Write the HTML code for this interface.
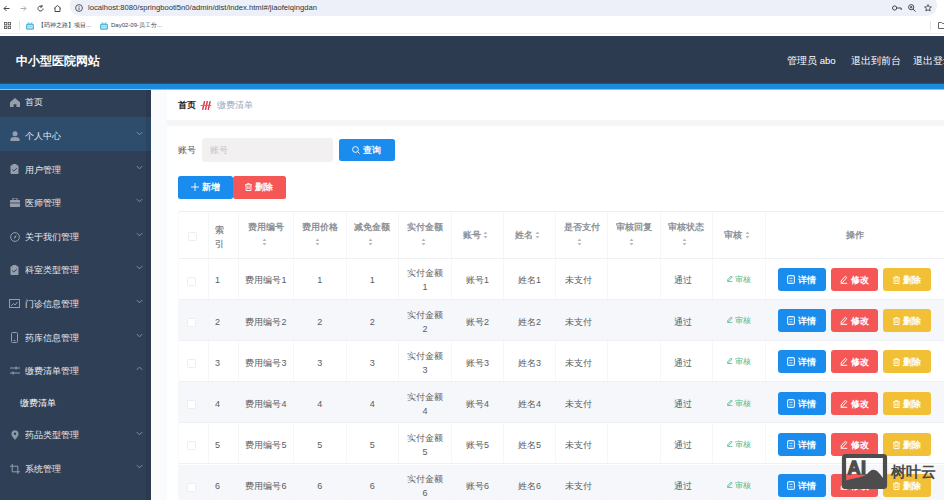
<!DOCTYPE html>
<html><head><meta charset="utf-8">
<style>
*{box-sizing:border-box;margin:0;padding:0}
html,body{width:944px;height:500px;overflow:hidden;background:#fff;font-family:"Liberation Sans",sans-serif}
#chrome{position:absolute;left:0;top:0;width:944px;height:36px;background:#fff}
#addr{position:absolute;left:70px;top:-5px;width:867px;height:21px;border-radius:10px;background:#edf0f8}
#url{position:absolute;left:88px;top:2.5px;font-size:7.65px;line-height:10px;color:#333;white-space:nowrap;letter-spacing:0px}
#bmbar{position:absolute;left:0;top:16px;width:944px;height:18px;background:#fff;border-bottom:1px solid #eceef1}
.bm{position:absolute;top:5px;font-size:6px;line-height:9px;color:#3c4043;white-space:nowrap}
#hdr{position:absolute;left:0;top:36px;width:944px;height:47px;background:#2c3b4f}
#title{position:absolute;left:16px;top:2px;line-height:47px;font-size:12.2px;font-weight:bold;color:#fff;letter-spacing:0px}
.hr{position:absolute;top:0.8px;line-height:48px;font-size:9.6px;font-weight:500;color:#fff;white-space:nowrap}
#blue{position:absolute;left:0;top:83px;width:944px;height:7px;background:linear-gradient(#1f5487 0,#1f5487 1px,#1b8be0 1px,#1b8be0 6px,#86c3ee 6px);z-index:5}
#side{position:absolute;left:0;top:83px;width:151px;height:417px;background:#2f3f55;overflow:hidden}
#side .edge{position:absolute;left:146px;top:0;width:4.5px;height:417px;background:rgba(0,0,0,0.07)}#side .edge2{position:absolute;left:150.5px;top:0;width:1px;height:417px;background:#1f2b3a}
.mi{position:absolute;left:0;width:151px;color:#e9ecf0;font-size:8.8px;font-weight:500;white-space:nowrap}
.mi.act{background:#2e4c6b}
.mi .ic{position:absolute;left:9px;top:1.6px;width:11px;height:100%;display:flex;align-items:center;justify-content:center}
.mi .ic svg{display:block}
.mi .tx{position:absolute;left:25px;top:2.6px}
.mi .chev{position:absolute;left:135.5px;top:50%;margin-top:-3.2px}
.mi.sub{padding-left:19.5px;padding-top:1.5px;color:#fff;font-weight:500}
#main{position:absolute;left:151px;top:89px;width:793px;height:411px;background:#fafbfc}
#gap{position:absolute;left:167px;top:119.5px;width:777px;height:6.5px;background:#f5f6f7}
#crumb{position:absolute;left:167px;top:89px;width:777px;height:31px;background:#fff}
#card{position:absolute;left:166.5px;top:126px;width:777px;height:374px;background:#fff}
.crumb1{position:absolute;left:178px;top:89px;line-height:32px;font-size:9px;font-weight:bold;color:#1f1f1f}
.crumb2{position:absolute;left:216.5px;top:89px;line-height:32px;font-size:8.6px;color:#97a8be}
.sep{position:absolute;left:200px;top:99px;width:12px;height:12px}
.lbl{position:absolute;left:177.5px;top:137.5px;line-height:24px;font-size:8.8px;font-weight:500;color:#4f5155}
.inp{position:absolute;left:202px;top:137.5px;width:131px;height:24px;border-radius:3px;background:#f2f0f0}
.inp span{position:absolute;left:8px;top:0;line-height:24px;font-size:8.6px;color:#c0c4cc}
.sbtn{position:absolute;border-radius:2.5px;color:#fff;font-size:9.2px;font-weight:bold;text-align:center;white-space:nowrap}
.td{position:absolute;border-right:1px solid #f5f6f8;border-bottom:1px solid #eef0f4;display:flex;align-items:center;justify-content:center;background:#fff}
.td.st{background:#f5f7fa}
.td.last{border-right:none}
.ht{font-size:9.4px;font-weight:bold;line-height:16px;padding-top:0px;color:#8e9197;text-align:center;width:100%}
.bt{font-size:9px;font-weight:500;line-height:16px;padding-top:3.5px;color:#5a5c60;text-align:center;width:100%}
.gl{font-size:7.8px;color:#4cba92;white-space:nowrap;padding-top:2px}
.cb{display:block;width:9px;height:9px;border:1px solid #eceef1;border-radius:1.5px;background:#fff}
.sort{vertical-align:middle}
.ops{display:flex;gap:5px;position:absolute;left:12.5px;top:9.5px}
.btn{display:inline-block;width:47.5px;height:23px;line-height:24.5px;border-radius:3px;color:#fff;font-size:9.2px;font-weight:bold;text-align:center;white-space:nowrap}
.btn svg{vertical-align:-1px}
.b1{background:#1a8cee}.b2{background:#f55656}.b3{background:#f2c036}
#tbltop{position:absolute;left:178px;top:211px;width:766px;height:1px;background:#eceef3}
#tblleft{position:absolute;left:177.5px;top:211px;width:1px;height:289px;background:#f7f8f9}
#wm{position:absolute;left:842px;top:455px;width:44px;height:37px;border:4px solid #4a4a4a;border-radius:4px;background:rgba(255,255,255,0.3);z-index:9}
#wmtxt{position:absolute;left:890.5px;top:460px;font-size:15px;font-weight:bold;color:#4a4a4a;z-index:9;line-height:24px;white-space:nowrap}
</style></head>
<body>
<div id="chrome">
  <div id="addr"></div>
  <svg style="position:absolute;left:3px;top:5px" width="7" height="7" viewBox="0 0 7 7"><path d="M6.5 3.5H1M3.5 1L1 3.5 3.5 6" stroke="#474747" stroke-width="1" fill="none"/></svg>
  <svg style="position:absolute;left:20px;top:5px" width="7" height="7" viewBox="0 0 7 7"><path d="M0.5 3.5H6M3.5 1L6 3.5 3.5 6" stroke="#b0b0b0" stroke-width="1" fill="none"/></svg>
  <svg style="position:absolute;left:37px;top:4.5px" width="7" height="7" viewBox="0 0 7 7"><path d="M6 3.5A2.5 2.5 0 1 1 5 1.5M5 0v2h-2" stroke="#474747" stroke-width="1" fill="none"/></svg>
  <svg style="position:absolute;left:54px;top:4.5px" width="7" height="7" viewBox="0 0 7 7"><path d="M1 3v3.5h5V3M0 3.5L3.5 0.5 7 3.5" stroke="#474747" stroke-width="1" fill="none"/></svg>
  <svg style="position:absolute;left:74.5px;top:4px" width="8" height="8" viewBox="0 0 8 8"><circle cx="4" cy="4" r="3.4" stroke="#474747" stroke-width="0.9" fill="none"/><path d="M4 3.4v2.6M4 2v0.8" stroke="#474747" stroke-width="0.9"/></svg>
  <div id="url">localhost:8080/springbootl5n0/admin/dist/index.html#/jiaofeiqingdan</div>
  <svg style="position:absolute;left:892px;top:5px" width="10" height="6" viewBox="0 0 10 6"><circle cx="2.6" cy="3" r="2.1" stroke="#474747" stroke-width="1" fill="none"/><path d="M4.7 3h4.5v2" stroke="#474747" stroke-width="1" fill="none"/></svg>
  <svg style="position:absolute;left:908px;top:4px" width="8" height="8" viewBox="0 0 8 8"><circle cx="3.2" cy="3.2" r="2.6" stroke="#474747" stroke-width="1" fill="none"/><path d="M5 5l2.6 2.6M2 3.2h2.4M3.2 2v2.4" stroke="#474747" stroke-width="1"/></svg>
  <svg style="position:absolute;left:923.5px;top:4px" width="8" height="8" viewBox="0 0 8 8"><path d="M4 0.6l1 2.2 2.4 0.2-1.8 1.6 0.6 2.4L4 5.8 1.8 7l0.6-2.4L0.6 3l2.4-0.2z" stroke="#474747" stroke-width="0.9" fill="none"/></svg>
  <div id="bmbar"></div>
  <svg style="position:absolute;left:4px;top:22px" width="7" height="7" viewBox="0 0 7 7"><rect x="0.4" y="0.4" width="2.4" height="2.4" stroke="#555" stroke-width="0.8" fill="none"/><rect x="4.2" y="0.4" width="2.4" height="2.4" stroke="#555" stroke-width="0.8" fill="none"/><rect x="0.4" y="4.2" width="2.4" height="2.4" stroke="#555" stroke-width="0.8" fill="none"/><rect x="4.2" y="4.2" width="2.4" height="2.4" stroke="#555" stroke-width="0.8" fill="none"/></svg>
  <div style="position:absolute;left:19px;top:21px;width:1px;height:9px;background:#e3e3e3"></div>
  <svg style="position:absolute;left:26px;top:21.5px" width="8" height="8" viewBox="0 0 8 8"><rect x="0" y="1.6" width="8" height="6.2" rx="1.6" fill="#52b9d9"/><path d="M2 0.2l1 1.5M6 0.2l-1 1.5" stroke="#52b9d9" stroke-width="0.9"/><rect x="1.2" y="3" width="5.6" height="3.4" rx="0.6" fill="#bfe6f2"/><rect x="2.2" y="4.2" width="1.2" height="0.8" fill="#52b9d9"/><rect x="4.6" y="4.2" width="1.2" height="0.8" fill="#52b9d9"/></svg>
  <div class="bm" style="left:38px;top:21px">【码神之路】项目...</div>
  <svg style="position:absolute;left:100px;top:21.5px" width="8" height="8" viewBox="0 0 8 8"><rect x="0" y="1.6" width="8" height="6.2" rx="1.6" fill="#52b9d9"/><path d="M2 0.2l1 1.5M6 0.2l-1 1.5" stroke="#52b9d9" stroke-width="0.9"/><rect x="1.2" y="3" width="5.6" height="3.4" rx="0.6" fill="#bfe6f2"/><rect x="2.2" y="4.2" width="1.2" height="0.8" fill="#52b9d9"/><rect x="4.6" y="4.2" width="1.2" height="0.8" fill="#52b9d9"/></svg>
  <div class="bm" style="left:111px;top:21px">Day02-09-员工分...</div>
  <div style="position:absolute;left:930px;top:21px;width:1px;height:9px;background:#e3e3e3"></div>
  <svg style="position:absolute;left:938px;top:22px" width="9" height="7" viewBox="0 0 9 7"><path d="M0.5 0.5h3l1 1h4v5h-8z" stroke="#555" stroke-width="0.9" fill="none"/></svg>
</div>
<div id="hdr">
  <div id="title">中小型医院网站</div>
  <div class="hr" style="left:787px">管理员 abo</div>
  <div class="hr" style="left:851px">退出到前台</div>
  <div class="hr" style="left:912.8px">退出登录</div>
</div>
<div id="blue"></div>
<div id="side">
<div class="mi" style="top:0.80px;height:33.6px;line-height:33.6px"><span class="ic"><svg width="10" height="9" viewBox="0 0 10 9"><path d="M5 0L0 4.2V9h3.6V6.2h2.8V9H10V4.2z" fill="#959eac"/></svg></span><span class="tx">首页</span></div>
<div class="mi act" style="top:34.40px;height:33.6px;line-height:33.6px"><span class="ic"><svg width="10" height="10" viewBox="0 0 10 10"><circle cx="5" cy="2.8" r="2.5" fill="#959eac"/><path d="M0.5 10v-1.8C0.5 6.8 2 6 5 6s4.5 .8 4.5 2.2V10z" fill="#959eac"/></svg></span><span class="tx">个人中心</span><svg class="chev" width="7" height="5" viewBox="0 0 7 5"><path d="M0.8 1.1L3.5 3.8l2.7-2.7" stroke="#8f99a7" stroke-width="0.9" fill="none"/></svg></div>
<div class="mi" style="top:68.00px;height:33.6px;line-height:33.6px"><span class="ic"><svg width="9" height="10" viewBox="0 0 9 10"><rect x="0.5" y="1.2" width="8" height="8.8" rx="0.8" fill="#959eac"/><rect x="2.5" y="0" width="4" height="2.2" fill="#959eac"/><path d="M2.2 5.5l1.6 1.6 3-3" stroke="#304156" stroke-width="1" fill="none"/></svg></span><span class="tx">用户管理</span><svg class="chev" width="7" height="5" viewBox="0 0 7 5"><path d="M0.8 1.1L3.5 3.8l2.7-2.7" stroke="#8f99a7" stroke-width="0.9" fill="none"/></svg></div>
<div class="mi" style="top:101.60px;height:33.6px;line-height:33.6px"><span class="ic"><svg width="10" height="9" viewBox="0 0 10 9"><rect x="0" y="2" width="10" height="7" rx="0.8" fill="#959eac"/><rect x="3" y="0" width="4" height="2.5" fill="none" stroke="#959eac" stroke-width="1"/><rect x="0" y="4.6" width="10" height="0.8" fill="#304156"/></svg></span><span class="tx">医师管理</span><svg class="chev" width="7" height="5" viewBox="0 0 7 5"><path d="M0.8 1.1L3.5 3.8l2.7-2.7" stroke="#8f99a7" stroke-width="0.9" fill="none"/></svg></div>
<div class="mi" style="top:135.20px;height:33.6px;line-height:33.6px"><span class="ic"><svg width="10" height="10" viewBox="0 0 10 10"><circle cx="5" cy="5" r="4.4" fill="none" stroke="#959eac" stroke-width="1"/><path d="M6.8 2.8L5.6 5.6 3.6 7 4.6 4.6z" fill="#959eac"/></svg></span><span class="tx">关于我们管理</span><svg class="chev" width="7" height="5" viewBox="0 0 7 5"><path d="M0.8 1.1L3.5 3.8l2.7-2.7" stroke="#8f99a7" stroke-width="0.9" fill="none"/></svg></div>
<div class="mi" style="top:168.80px;height:33.6px;line-height:33.6px"><span class="ic"><svg width="9" height="10" viewBox="0 0 9 10"><rect x="0.5" y="1.2" width="8" height="8.8" rx="0.8" fill="#959eac"/><rect x="2.5" y="0" width="4" height="2.2" fill="#959eac"/><path d="M2.2 5.5l1.6 1.6 3-3" stroke="#304156" stroke-width="1" fill="none"/></svg></span><span class="tx">科室类型管理</span><svg class="chev" width="7" height="5" viewBox="0 0 7 5"><path d="M0.8 1.1L3.5 3.8l2.7-2.7" stroke="#8f99a7" stroke-width="0.9" fill="none"/></svg></div>
<div class="mi" style="top:202.40px;height:33.6px;line-height:33.6px"><span class="ic"><svg width="11" height="9" viewBox="0 0 11 9"><rect x="0.5" y="0.5" width="10" height="8" fill="none" stroke="#959eac" stroke-width="1"/><path d="M2 7l2.5-2.5 1.5 1.5 2.5-3" stroke="#959eac" stroke-width="1" fill="none"/></svg></span><span class="tx">门诊信息管理</span><svg class="chev" width="7" height="5" viewBox="0 0 7 5"><path d="M0.8 1.1L3.5 3.8l2.7-2.7" stroke="#8f99a7" stroke-width="0.9" fill="none"/></svg></div>
<div class="mi" style="top:236.00px;height:33.6px;line-height:33.6px"><span class="ic"><svg width="7" height="11" viewBox="0 0 7 11"><rect x="0.5" y="0.5" width="6" height="10" rx="1" fill="none" stroke="#959eac" stroke-width="1"/><rect x="2.5" y="8" width="2" height="1" fill="#959eac"/></svg></span><span class="tx">药库信息管理</span><svg class="chev" width="7" height="5" viewBox="0 0 7 5"><path d="M0.8 1.1L3.5 3.8l2.7-2.7" stroke="#8f99a7" stroke-width="0.9" fill="none"/></svg></div>
<div class="mi" style="top:269.60px;height:33.6px;line-height:33.6px"><span class="ic"><svg width="10" height="9" viewBox="0 0 10 9"><path d="M0 2h10M0 7h10" stroke="#959eac" stroke-width="1"/><rect x="5.5" y="0.5" width="1.2" height="3" fill="#959eac"/><rect x="2.5" y="5.5" width="1.2" height="3" fill="#959eac"/></svg></span><span class="tx">缴费清单管理</span><svg class="chev" width="7" height="5" viewBox="0 0 7 5"><path d="M0.8 3.8L3.5 1.1l2.7 2.7" stroke="#8f99a7" stroke-width="0.9" fill="none"/></svg></div>
<div class="mi sub" style="top:303.20px;height:30.7px;line-height:30.7px">缴费清单</div>
<div class="mi" style="top:333.90px;height:33.6px;line-height:33.6px"><span class="ic"><svg width="8" height="10" viewBox="0 0 8 10"><path d="M4 0.3C1.9 0.3 0.4 1.9 0.4 3.9c0 2.3 3.6 5.8 3.6 5.8S7.6 6.2 7.6 3.9C7.6 1.9 6.1 0.3 4 0.3z" fill="#8e97a5"/><circle cx="4" cy="3.8" r="1.2" fill="#2f3f55"/></svg></span><span class="tx">药品类型管理</span><svg class="chev" width="7" height="5" viewBox="0 0 7 5"><path d="M0.8 1.1L3.5 3.8l2.7-2.7" stroke="#8f99a7" stroke-width="0.9" fill="none"/></svg></div>
<div class="mi" style="top:367.50px;height:33.6px;line-height:33.6px"><span class="ic"><svg width="10" height="10" viewBox="0 0 10 10"><path d="M2.2 0v7.8H10M0 2.2h7.8V10" stroke="#959eac" stroke-width="1" fill="none"/></svg></span><span class="tx">系统管理</span><svg class="chev" width="7" height="5" viewBox="0 0 7 5"><path d="M0.8 1.1L3.5 3.8l2.7-2.7" stroke="#8f99a7" stroke-width="0.9" fill="none"/></svg></div>
<div class="edge"></div><div class="edge2"></div>
</div>
<div id="main"></div>
<div id="crumb"></div>
<div id="card"></div><div id="gap"></div>
<div class="crumb1">首页</div>
<svg style="position:absolute;left:199.5px;top:99.5px" width="12" height="11" viewBox="0 0 12 11"><path d="M4.6 1.2 L2.6 9.8 M7.4 1.2 L5.4 9.8 M10.2 1.2 L8.2 9.8" stroke="#d8323c" stroke-width="1.4" fill="none"/><path d="M0.6 5.5 L11.2 5.5" stroke="#ee5a62" stroke-width="1.1"/></svg>
<div class="crumb2">缴费清单</div>
<div class="lbl">账号</div>
<div class="inp"><span>账号</span></div>
<div class="sbtn" style="left:338.5px;top:138.5px;width:56.5px;height:22.5px;line-height:22.5px;background:#1a8cee"><svg width="8" height="8" viewBox="0 0 8 8" style="vertical-align:-1px"><circle cx="3.5" cy="3.5" r="2.9" stroke="#fff" stroke-width="0.9" fill="none"/><path d="M5.6 5.6L7.6 7.6" stroke="#fff" stroke-width="0.9"/></svg> 查询</div>
<div class="sbtn" style="left:178px;top:175.5px;width:54.5px;height:23px;line-height:23px;background:#1a8cee"><svg width="8" height="8" viewBox="0 0 8 8" style="vertical-align:-1px"><path d="M4 0v8M0 4h8" stroke="#fff" stroke-width="0.9"/></svg> 新增</div>
<div class="sbtn" style="left:232.5px;top:175.5px;width:53.5px;height:23px;line-height:23px;background:#f55656"><svg width="7" height="8" viewBox="0 0 7 8" style="vertical-align:-1px"><path d="M0 1.8h7M2.3 1.8V0.6h2.4v1.2M1 1.8v5.7h5V1.8M2.8 3.3v2.8M4.2 3.3v2.8" stroke="#fff" stroke-width="0.9" fill="none"/></svg> 删除</div>
<div class="td th" style="left:178px;top:211.5px;width:31px;height:47.0px"><span class="cb" style="margin-top:3px;margin-left:-2px"></span></div>
<div class="td th" style="left:209px;top:211.5px;width:30px;height:47.0px"><div class="ht" style="text-align:left;padding-left:6px;line-height:14px;padding-top:4.8px">索<br>引</div></div>
<div class="td th" style="left:239px;top:211.5px;width:55px;height:47.0px"><div class="ht">费用编号<br><span style="position:relative;top:-1px"><svg class="sort" style="margin-right:4px" width="5" height="8" viewBox="0 0 5 8"><path d="M2.5 0.5L4.5 3H0.5z M2.5 7.5L4.5 5H0.5z" fill="#b7bcc4"/></svg></span></div></div>
<div class="td th" style="left:294px;top:211.5px;width:52.5px;height:47.0px"><div class="ht">费用价格<br><span style="position:relative;top:-1px"><svg class="sort" style="margin-right:4px" width="5" height="8" viewBox="0 0 5 8"><path d="M2.5 0.5L4.5 3H0.5z M2.5 7.5L4.5 5H0.5z" fill="#b7bcc4"/></svg></span></div></div>
<div class="td th" style="left:346.5px;top:211.5px;width:52.5px;height:47.0px"><div class="ht">减免金额<br><span style="position:relative;top:-1px"><svg class="sort" style="margin-right:4px" width="5" height="8" viewBox="0 0 5 8"><path d="M2.5 0.5L4.5 3H0.5z M2.5 7.5L4.5 5H0.5z" fill="#b7bcc4"/></svg></span></div></div>
<div class="td th" style="left:399px;top:211.5px;width:53px;height:47.0px"><div class="ht">实付金额<br><span style="position:relative;top:-1px"><svg class="sort" style="margin-right:4px" width="5" height="8" viewBox="0 0 5 8"><path d="M2.5 0.5L4.5 3H0.5z M2.5 7.5L4.5 5H0.5z" fill="#b7bcc4"/></svg></span></div></div>
<div class="td th" style="left:452px;top:211.5px;width:52px;height:47.0px"><div class="ht">账号 <svg class="sort" style="margin-right:4px" width="5" height="8" viewBox="0 0 5 8"><path d="M2.5 0.5L4.5 3H0.5z M2.5 7.5L4.5 5H0.5z" fill="#b7bcc4"/></svg></div></div>
<div class="td th" style="left:504px;top:211.5px;width:52px;height:47.0px"><div class="ht">姓名 <svg class="sort" style="margin-right:4px" width="5" height="8" viewBox="0 0 5 8"><path d="M2.5 0.5L4.5 3H0.5z M2.5 7.5L4.5 5H0.5z" fill="#b7bcc4"/></svg></div></div>
<div class="td th" style="left:556px;top:211.5px;width:52px;height:47.0px"><div class="ht">是否支付<br><span style="position:relative;top:-1px"><svg class="sort" style="margin-right:4px" width="5" height="8" viewBox="0 0 5 8"><path d="M2.5 0.5L4.5 3H0.5z M2.5 7.5L4.5 5H0.5z" fill="#b7bcc4"/></svg></span></div></div>
<div class="td th" style="left:608px;top:211.5px;width:52.5px;height:47.0px"><div class="ht">审核回复<br><span style="position:relative;top:-1px"><svg class="sort" style="margin-right:4px" width="5" height="8" viewBox="0 0 5 8"><path d="M2.5 0.5L4.5 3H0.5z M2.5 7.5L4.5 5H0.5z" fill="#b7bcc4"/></svg></span></div></div>
<div class="td th" style="left:660.5px;top:211.5px;width:52.5px;height:47.0px"><div class="ht">审核状态<br><span style="position:relative;top:-1px"><svg class="sort" style="margin-right:4px" width="5" height="8" viewBox="0 0 5 8"><path d="M2.5 0.5L4.5 3H0.5z M2.5 7.5L4.5 5H0.5z" fill="#b7bcc4"/></svg></span></div></div>
<div class="td th" style="left:713px;top:211.5px;width:52.5px;height:47.0px"><div class="ht">审核 <svg class="sort" style="margin-right:4px" width="5" height="8" viewBox="0 0 5 8"><path d="M2.5 0.5L4.5 3H0.5z M2.5 7.5L4.5 5H0.5z" fill="#b7bcc4"/></svg></div></div>
<div class="td th last" style="left:765.5px;top:211.5px;width:178.5px;height:47.0px"><div class="ht">操作</div></div>
<div class="td tb" style="left:178px;top:258.5px;width:31px;height:41.19999999999999px"><span class="cb" style="margin-top:5px;margin-left:-4px"></span></div>
<div class="td tb" style="left:209px;top:258.5px;width:30px;height:41.19999999999999px"><div class="bt" style="text-align:left;padding-left:6px">1</div></div>
<div class="td tb" style="left:239px;top:258.5px;width:55px;height:41.19999999999999px"><div class="bt">费用编号1</div></div>
<div class="td tb" style="left:294px;top:258.5px;width:52.5px;height:41.19999999999999px"><div class="bt">1</div></div>
<div class="td tb" style="left:346.5px;top:258.5px;width:52.5px;height:41.19999999999999px"><div class="bt">1</div></div>
<div class="td tb" style="left:399px;top:258.5px;width:53px;height:41.19999999999999px"><div class="bt" style="line-height:14px">实付金额<br>1</div></div>
<div class="td tb" style="left:452px;top:258.5px;width:52px;height:41.19999999999999px"><div class="bt">账号1</div></div>
<div class="td tb" style="left:504px;top:258.5px;width:52px;height:41.19999999999999px"><div class="bt">姓名1</div></div>
<div class="td tb" style="left:556px;top:258.5px;width:52px;height:41.19999999999999px"><div class="bt" style="padding-right:6.5px">未支付</div></div>
<div class="td tb" style="left:608px;top:258.5px;width:52.5px;height:41.19999999999999px"><div class="bt"></div></div>
<div class="td tb" style="left:660.5px;top:258.5px;width:52.5px;height:41.19999999999999px"><div class="bt" style="padding-right:6.5px">通过</div></div>
<div class="td tb" style="left:713px;top:258.5px;width:52.5px;height:41.19999999999999px"><div class="gl"><svg width="6" height="7" viewBox="0 0 6 7"><path d="M0.8 6L0.6 4.8 4.2 1 5.2 2 1.6 5.8z M0.3 6.6h5" stroke="#42b983" stroke-width="0.8" fill="none"/></svg> 审核</div></div>
<div class="td tb last" style="left:765.5px;top:258.5px;width:178.5px;height:41.19999999999999px"><div class="ops"><span class="btn b1"><svg width="8" height="9" viewBox="0 0 8 9"><rect x="0.6" y="0.6" width="6.8" height="7.8" rx="1.4" fill="none" stroke="#e8f4ff" stroke-width="1.1"/><path d="M2.4 3.3h3.2M2.4 5.9h3.2" stroke="#e8f4ff" stroke-width="0.9"/></svg> 详情</span><span class="btn b2"><svg width="8" height="9" viewBox="0 0 8 9"><path d="M1.2 7.6L1 6 5.4 1.2 6.8 2.5 2.6 7.4z M0.6 8.3h6.6" stroke="#fff" stroke-width="1" fill="none"/></svg> 修改</span><span class="btn b3"><svg width="7" height="8" viewBox="0 0 7 8"><path d="M0 1.8h7M2.3 1.8V0.6h2.4v1.2M1 1.8v5.7h5V1.8M2.8 3.3v2.8M4.2 3.3v2.8" stroke="#fff" stroke-width="0.9" fill="none"/></svg> 删除</span></div></div>
<div class="td tb st" style="left:178px;top:299.7px;width:31px;height:41.19999999999999px"><span class="cb" style="margin-top:5px;margin-left:-4px"></span></div>
<div class="td tb st" style="left:209px;top:299.7px;width:30px;height:41.19999999999999px"><div class="bt" style="text-align:left;padding-left:6px">2</div></div>
<div class="td tb st" style="left:239px;top:299.7px;width:55px;height:41.19999999999999px"><div class="bt">费用编号2</div></div>
<div class="td tb st" style="left:294px;top:299.7px;width:52.5px;height:41.19999999999999px"><div class="bt">2</div></div>
<div class="td tb st" style="left:346.5px;top:299.7px;width:52.5px;height:41.19999999999999px"><div class="bt">2</div></div>
<div class="td tb st" style="left:399px;top:299.7px;width:53px;height:41.19999999999999px"><div class="bt" style="line-height:14px">实付金额<br>2</div></div>
<div class="td tb st" style="left:452px;top:299.7px;width:52px;height:41.19999999999999px"><div class="bt">账号2</div></div>
<div class="td tb st" style="left:504px;top:299.7px;width:52px;height:41.19999999999999px"><div class="bt">姓名2</div></div>
<div class="td tb st" style="left:556px;top:299.7px;width:52px;height:41.19999999999999px"><div class="bt" style="padding-right:6.5px">未支付</div></div>
<div class="td tb st" style="left:608px;top:299.7px;width:52.5px;height:41.19999999999999px"><div class="bt"></div></div>
<div class="td tb st" style="left:660.5px;top:299.7px;width:52.5px;height:41.19999999999999px"><div class="bt" style="padding-right:6.5px">通过</div></div>
<div class="td tb st" style="left:713px;top:299.7px;width:52.5px;height:41.19999999999999px"><div class="gl"><svg width="6" height="7" viewBox="0 0 6 7"><path d="M0.8 6L0.6 4.8 4.2 1 5.2 2 1.6 5.8z M0.3 6.6h5" stroke="#42b983" stroke-width="0.8" fill="none"/></svg> 审核</div></div>
<div class="td tb st last" style="left:765.5px;top:299.7px;width:178.5px;height:41.19999999999999px"><div class="ops"><span class="btn b1"><svg width="8" height="9" viewBox="0 0 8 9"><rect x="0.6" y="0.6" width="6.8" height="7.8" rx="1.4" fill="none" stroke="#e8f4ff" stroke-width="1.1"/><path d="M2.4 3.3h3.2M2.4 5.9h3.2" stroke="#e8f4ff" stroke-width="0.9"/></svg> 详情</span><span class="btn b2"><svg width="8" height="9" viewBox="0 0 8 9"><path d="M1.2 7.6L1 6 5.4 1.2 6.8 2.5 2.6 7.4z M0.6 8.3h6.6" stroke="#fff" stroke-width="1" fill="none"/></svg> 修改</span><span class="btn b3"><svg width="7" height="8" viewBox="0 0 7 8"><path d="M0 1.8h7M2.3 1.8V0.6h2.4v1.2M1 1.8v5.7h5V1.8M2.8 3.3v2.8M4.2 3.3v2.8" stroke="#fff" stroke-width="0.9" fill="none"/></svg> 删除</span></div></div>
<div class="td tb" style="left:178px;top:340.9px;width:31px;height:41.200000000000045px"><span class="cb" style="margin-top:5px;margin-left:-4px"></span></div>
<div class="td tb" style="left:209px;top:340.9px;width:30px;height:41.200000000000045px"><div class="bt" style="text-align:left;padding-left:6px">3</div></div>
<div class="td tb" style="left:239px;top:340.9px;width:55px;height:41.200000000000045px"><div class="bt">费用编号3</div></div>
<div class="td tb" style="left:294px;top:340.9px;width:52.5px;height:41.200000000000045px"><div class="bt">3</div></div>
<div class="td tb" style="left:346.5px;top:340.9px;width:52.5px;height:41.200000000000045px"><div class="bt">3</div></div>
<div class="td tb" style="left:399px;top:340.9px;width:53px;height:41.200000000000045px"><div class="bt" style="line-height:14px">实付金额<br>3</div></div>
<div class="td tb" style="left:452px;top:340.9px;width:52px;height:41.200000000000045px"><div class="bt">账号3</div></div>
<div class="td tb" style="left:504px;top:340.9px;width:52px;height:41.200000000000045px"><div class="bt">姓名3</div></div>
<div class="td tb" style="left:556px;top:340.9px;width:52px;height:41.200000000000045px"><div class="bt" style="padding-right:6.5px">未支付</div></div>
<div class="td tb" style="left:608px;top:340.9px;width:52.5px;height:41.200000000000045px"><div class="bt"></div></div>
<div class="td tb" style="left:660.5px;top:340.9px;width:52.5px;height:41.200000000000045px"><div class="bt" style="padding-right:6.5px">通过</div></div>
<div class="td tb" style="left:713px;top:340.9px;width:52.5px;height:41.200000000000045px"><div class="gl"><svg width="6" height="7" viewBox="0 0 6 7"><path d="M0.8 6L0.6 4.8 4.2 1 5.2 2 1.6 5.8z M0.3 6.6h5" stroke="#42b983" stroke-width="0.8" fill="none"/></svg> 审核</div></div>
<div class="td tb last" style="left:765.5px;top:340.9px;width:178.5px;height:41.200000000000045px"><div class="ops"><span class="btn b1"><svg width="8" height="9" viewBox="0 0 8 9"><rect x="0.6" y="0.6" width="6.8" height="7.8" rx="1.4" fill="none" stroke="#e8f4ff" stroke-width="1.1"/><path d="M2.4 3.3h3.2M2.4 5.9h3.2" stroke="#e8f4ff" stroke-width="0.9"/></svg> 详情</span><span class="btn b2"><svg width="8" height="9" viewBox="0 0 8 9"><path d="M1.2 7.6L1 6 5.4 1.2 6.8 2.5 2.6 7.4z M0.6 8.3h6.6" stroke="#fff" stroke-width="1" fill="none"/></svg> 修改</span><span class="btn b3"><svg width="7" height="8" viewBox="0 0 7 8"><path d="M0 1.8h7M2.3 1.8V0.6h2.4v1.2M1 1.8v5.7h5V1.8M2.8 3.3v2.8M4.2 3.3v2.8" stroke="#fff" stroke-width="0.9" fill="none"/></svg> 删除</span></div></div>
<div class="td tb st" style="left:178px;top:382.1px;width:31px;height:41.19999999999999px"><span class="cb" style="margin-top:5px;margin-left:-4px"></span></div>
<div class="td tb st" style="left:209px;top:382.1px;width:30px;height:41.19999999999999px"><div class="bt" style="text-align:left;padding-left:6px">4</div></div>
<div class="td tb st" style="left:239px;top:382.1px;width:55px;height:41.19999999999999px"><div class="bt">费用编号4</div></div>
<div class="td tb st" style="left:294px;top:382.1px;width:52.5px;height:41.19999999999999px"><div class="bt">4</div></div>
<div class="td tb st" style="left:346.5px;top:382.1px;width:52.5px;height:41.19999999999999px"><div class="bt">4</div></div>
<div class="td tb st" style="left:399px;top:382.1px;width:53px;height:41.19999999999999px"><div class="bt" style="line-height:14px">实付金额<br>4</div></div>
<div class="td tb st" style="left:452px;top:382.1px;width:52px;height:41.19999999999999px"><div class="bt">账号4</div></div>
<div class="td tb st" style="left:504px;top:382.1px;width:52px;height:41.19999999999999px"><div class="bt">姓名4</div></div>
<div class="td tb st" style="left:556px;top:382.1px;width:52px;height:41.19999999999999px"><div class="bt" style="padding-right:6.5px">未支付</div></div>
<div class="td tb st" style="left:608px;top:382.1px;width:52.5px;height:41.19999999999999px"><div class="bt"></div></div>
<div class="td tb st" style="left:660.5px;top:382.1px;width:52.5px;height:41.19999999999999px"><div class="bt" style="padding-right:6.5px">通过</div></div>
<div class="td tb st" style="left:713px;top:382.1px;width:52.5px;height:41.19999999999999px"><div class="gl"><svg width="6" height="7" viewBox="0 0 6 7"><path d="M0.8 6L0.6 4.8 4.2 1 5.2 2 1.6 5.8z M0.3 6.6h5" stroke="#42b983" stroke-width="0.8" fill="none"/></svg> 审核</div></div>
<div class="td tb st last" style="left:765.5px;top:382.1px;width:178.5px;height:41.19999999999999px"><div class="ops"><span class="btn b1"><svg width="8" height="9" viewBox="0 0 8 9"><rect x="0.6" y="0.6" width="6.8" height="7.8" rx="1.4" fill="none" stroke="#e8f4ff" stroke-width="1.1"/><path d="M2.4 3.3h3.2M2.4 5.9h3.2" stroke="#e8f4ff" stroke-width="0.9"/></svg> 详情</span><span class="btn b2"><svg width="8" height="9" viewBox="0 0 8 9"><path d="M1.2 7.6L1 6 5.4 1.2 6.8 2.5 2.6 7.4z M0.6 8.3h6.6" stroke="#fff" stroke-width="1" fill="none"/></svg> 修改</span><span class="btn b3"><svg width="7" height="8" viewBox="0 0 7 8"><path d="M0 1.8h7M2.3 1.8V0.6h2.4v1.2M1 1.8v5.7h5V1.8M2.8 3.3v2.8M4.2 3.3v2.8" stroke="#fff" stroke-width="0.9" fill="none"/></svg> 删除</span></div></div>
<div class="td tb" style="left:178px;top:423.3px;width:31px;height:41.19999999999999px"><span class="cb" style="margin-top:5px;margin-left:-4px"></span></div>
<div class="td tb" style="left:209px;top:423.3px;width:30px;height:41.19999999999999px"><div class="bt" style="text-align:left;padding-left:6px">5</div></div>
<div class="td tb" style="left:239px;top:423.3px;width:55px;height:41.19999999999999px"><div class="bt">费用编号5</div></div>
<div class="td tb" style="left:294px;top:423.3px;width:52.5px;height:41.19999999999999px"><div class="bt">5</div></div>
<div class="td tb" style="left:346.5px;top:423.3px;width:52.5px;height:41.19999999999999px"><div class="bt">5</div></div>
<div class="td tb" style="left:399px;top:423.3px;width:53px;height:41.19999999999999px"><div class="bt" style="line-height:14px">实付金额<br>5</div></div>
<div class="td tb" style="left:452px;top:423.3px;width:52px;height:41.19999999999999px"><div class="bt">账号5</div></div>
<div class="td tb" style="left:504px;top:423.3px;width:52px;height:41.19999999999999px"><div class="bt">姓名5</div></div>
<div class="td tb" style="left:556px;top:423.3px;width:52px;height:41.19999999999999px"><div class="bt" style="padding-right:6.5px">未支付</div></div>
<div class="td tb" style="left:608px;top:423.3px;width:52.5px;height:41.19999999999999px"><div class="bt"></div></div>
<div class="td tb" style="left:660.5px;top:423.3px;width:52.5px;height:41.19999999999999px"><div class="bt" style="padding-right:6.5px">通过</div></div>
<div class="td tb" style="left:713px;top:423.3px;width:52.5px;height:41.19999999999999px"><div class="gl"><svg width="6" height="7" viewBox="0 0 6 7"><path d="M0.8 6L0.6 4.8 4.2 1 5.2 2 1.6 5.8z M0.3 6.6h5" stroke="#42b983" stroke-width="0.8" fill="none"/></svg> 审核</div></div>
<div class="td tb last" style="left:765.5px;top:423.3px;width:178.5px;height:41.19999999999999px"><div class="ops"><span class="btn b1"><svg width="8" height="9" viewBox="0 0 8 9"><rect x="0.6" y="0.6" width="6.8" height="7.8" rx="1.4" fill="none" stroke="#e8f4ff" stroke-width="1.1"/><path d="M2.4 3.3h3.2M2.4 5.9h3.2" stroke="#e8f4ff" stroke-width="0.9"/></svg> 详情</span><span class="btn b2"><svg width="8" height="9" viewBox="0 0 8 9"><path d="M1.2 7.6L1 6 5.4 1.2 6.8 2.5 2.6 7.4z M0.6 8.3h6.6" stroke="#fff" stroke-width="1" fill="none"/></svg> 修改</span><span class="btn b3"><svg width="7" height="8" viewBox="0 0 7 8"><path d="M0 1.8h7M2.3 1.8V0.6h2.4v1.2M1 1.8v5.7h5V1.8M2.8 3.3v2.8M4.2 3.3v2.8" stroke="#fff" stroke-width="0.9" fill="none"/></svg> 删除</span></div></div>
<div class="td tb st" style="left:178px;top:464.5px;width:31px;height:41.19999999999999px"><span class="cb" style="margin-top:5px;margin-left:-4px"></span></div>
<div class="td tb st" style="left:209px;top:464.5px;width:30px;height:41.19999999999999px"><div class="bt" style="text-align:left;padding-left:6px">6</div></div>
<div class="td tb st" style="left:239px;top:464.5px;width:55px;height:41.19999999999999px"><div class="bt">费用编号6</div></div>
<div class="td tb st" style="left:294px;top:464.5px;width:52.5px;height:41.19999999999999px"><div class="bt">6</div></div>
<div class="td tb st" style="left:346.5px;top:464.5px;width:52.5px;height:41.19999999999999px"><div class="bt">6</div></div>
<div class="td tb st" style="left:399px;top:464.5px;width:53px;height:41.19999999999999px"><div class="bt" style="line-height:14px">实付金额<br>6</div></div>
<div class="td tb st" style="left:452px;top:464.5px;width:52px;height:41.19999999999999px"><div class="bt">账号6</div></div>
<div class="td tb st" style="left:504px;top:464.5px;width:52px;height:41.19999999999999px"><div class="bt">姓名6</div></div>
<div class="td tb st" style="left:556px;top:464.5px;width:52px;height:41.19999999999999px"><div class="bt" style="padding-right:6.5px">未支付</div></div>
<div class="td tb st" style="left:608px;top:464.5px;width:52.5px;height:41.19999999999999px"><div class="bt"></div></div>
<div class="td tb st" style="left:660.5px;top:464.5px;width:52.5px;height:41.19999999999999px"><div class="bt" style="padding-right:6.5px">通过</div></div>
<div class="td tb st" style="left:713px;top:464.5px;width:52.5px;height:41.19999999999999px"><div class="gl"><svg width="6" height="7" viewBox="0 0 6 7"><path d="M0.8 6L0.6 4.8 4.2 1 5.2 2 1.6 5.8z M0.3 6.6h5" stroke="#42b983" stroke-width="0.8" fill="none"/></svg> 审核</div></div>
<div class="td tb st last" style="left:765.5px;top:464.5px;width:178.5px;height:41.19999999999999px"><div class="ops"><span class="btn b1"><svg width="8" height="9" viewBox="0 0 8 9"><rect x="0.6" y="0.6" width="6.8" height="7.8" rx="1.4" fill="none" stroke="#e8f4ff" stroke-width="1.1"/><path d="M2.4 3.3h3.2M2.4 5.9h3.2" stroke="#e8f4ff" stroke-width="0.9"/></svg> 详情</span><span class="btn b2"><svg width="8" height="9" viewBox="0 0 8 9"><path d="M1.2 7.6L1 6 5.4 1.2 6.8 2.5 2.6 7.4z M0.6 8.3h6.6" stroke="#fff" stroke-width="1" fill="none"/></svg> 修改</span><span class="btn b3"><svg width="7" height="8" viewBox="0 0 7 8"><path d="M0 1.8h7M2.3 1.8V0.6h2.4v1.2M1 1.8v5.7h5V1.8M2.8 3.3v2.8M4.2 3.3v2.8" stroke="#fff" stroke-width="0.9" fill="none"/></svg> 删除</span></div></div>
<div id="tbltop"></div>
<div id="tblleft"></div>
<svg style="position:absolute;left:841px;top:453px;z-index:9" width="47" height="37" viewBox="0 0 47 37"><rect x="3" y="3" width="41" height="31" rx="1.5" fill="none" stroke="#4d4d4d" stroke-width="4.2"/><text x="6.5" y="21" font-family="Liberation Sans" font-weight="bold" font-size="18" fill="#4d4d4d" stroke="#4d4d4d" stroke-width="1.3" letter-spacing="0.6">AI</text><path d="M5 27.5 C12 25 19 25 24 22.5 C27 21 29 17 32 16.8 C36 16.5 39 21 42 25 L42 34 L5 34z" fill="#4d4d4d"/></svg>
<div id="wmtxt">树叶云</div>
</body></html>
